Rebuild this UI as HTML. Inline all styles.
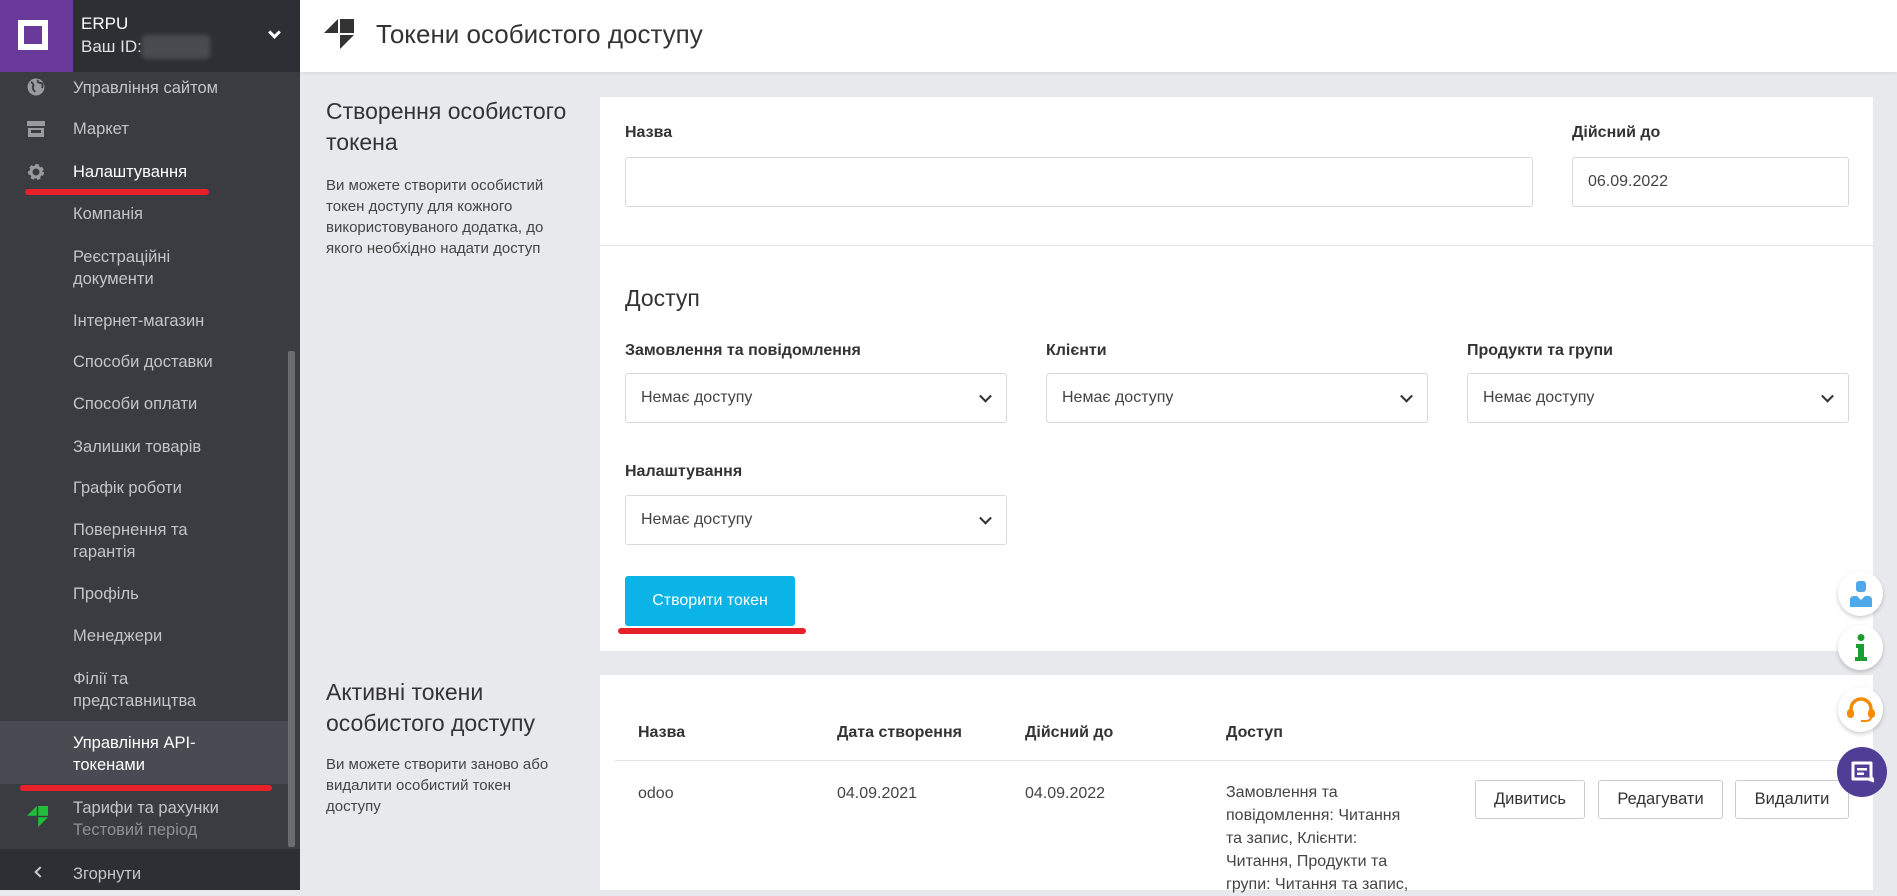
<!DOCTYPE html>
<html><head><meta charset="utf-8"><style>
*{box-sizing:border-box;margin:0;padding:0}
body{width:1897px;height:890px;overflow:hidden;background:#e8e9ed;font-family:"Liberation Sans",Arial,sans-serif;position:relative;color:#333}
.abs{position:absolute}
#sb{left:0;top:0;width:300px;height:890px;background:#3b3c41}
#sbh{left:0;top:0;width:300px;height:72px;background:#2e2f34}
#logo{left:0;top:0;width:73px;height:72px;background:#6a3a9a}
.si{position:absolute;left:73px;color:#c4c5c8;font-size:16.5px;line-height:22px}
.ic{position:absolute;left:27px}
#hdr{left:300px;top:0;width:1597px;height:72px;background:#fff;box-shadow:0 1px 3px rgba(0,0,0,.08)}
.card{position:absolute;background:#fff}
.lbl{position:absolute;font-weight:bold;font-size:16px;color:#333}
.inp{position:absolute;border:1px solid #d8d8d8;border-radius:3px;background:#fff;font-size:16px;color:#444;padding-left:15px;display:flex;align-items:center}
.sel::after{content:"";position:absolute;right:16px;top:50%;width:7px;height:7px;border-right:2.5px solid #333;border-bottom:2.5px solid #333;transform:translateY(-70%) rotate(45deg)}
.h2{position:absolute;font-size:23px;color:#333;line-height:31px}
.p{position:absolute;font-size:15px;color:#444;line-height:21px}
.th{position:absolute;top:724px;font-weight:bold;font-size:16px}
.td{position:absolute;top:785px;font-size:16px;color:#444}
.btn{position:absolute;top:780px;height:39px;border:1px solid #ccc;border-radius:3px;background:#fff;font-size:16.5px;color:#333;display:flex;align-items:center;justify-content:center}
.fb{position:absolute;left:1838px;width:45px;height:45px;border-radius:50%;background:#fff;box-shadow:0 2px 4px rgba(0,0,0,.2);display:flex;align-items:center;justify-content:center}
.red{position:absolute;height:6px;background:#e8202a;border-radius:3px}
</style></head><body>
<div id="sb" class="abs"></div>
<div id="sbh" class="abs"></div>
<div id="logo" class="abs"><div class="abs" style="left:18px;top:20px;width:30px;height:30px;border:6px solid #fff;background:#6a3a9a"></div></div>
<div class="abs" style="left:81px;top:14px;color:#fff;font-size:17px">ERPU</div>
<div class="abs" style="left:81px;top:37px;color:#e0e0e0;font-size:17px">Ваш ID:</div>
<div class="abs" style="left:142px;top:35px;width:68px;height:24px;background:#4a4b50;border-radius:4px;filter:blur(2px)"></div>
<div class="abs" style="left:270px;top:28px;width:9px;height:9px;border-right:3px solid #fff;border-bottom:3px solid #fff;transform:rotate(45deg)"></div>

<svg class="ic" style="top:78px" width="18" height="18" viewBox="0 0 18 18"><circle cx="9" cy="9" r="8.5" fill="#9a9b9f"/><path d="M4 4c2 1 3 3 2 5s1 3 2 5M11 2c-1 2 1 3 3 3s2 3 1 5" stroke="#3b3c41" stroke-width="2" fill="none"/></svg>
<div class="si" style="top:77px">Управління сайтом</div>
<svg class="ic" style="top:121px" width="18" height="16" viewBox="0 0 18 16"><rect x="0" y="0" width="18" height="5" fill="#9a9b9f"/><rect x="1" y="7" width="16" height="9" fill="#9a9b9f"/><rect x="4" y="9" width="10" height="3" fill="#3b3c41"/></svg>
<div class="si" style="top:118px">Маркет</div>
<svg class="ic" style="top:163px" width="18" height="18" viewBox="0 0 18 18"><circle cx="9" cy="9" r="6" fill="none" stroke="#9a9b9f" stroke-width="4" stroke-dasharray="3 2.5"/><circle cx="9" cy="9" r="5" fill="none" stroke="#9a9b9f" stroke-width="3"/><circle cx="9" cy="9" r="2" fill="#3b3c41"/></svg>
<div class="si" style="top:161px;color:#fff">Налаштування</div>
<div class="red" style="left:25px;top:189px;width:184px"></div>
<div class="si" style="top:203px">Компанія</div>
<div class="si" style="top:246px">Реєстраційні<br>документи</div>
<div class="si" style="top:310px">Інтернет-магазин</div>
<div class="si" style="top:351px">Способи доставки</div>
<div class="si" style="top:393px">Способи оплати</div>
<div class="si" style="top:436px">Залишки товарів</div>
<div class="si" style="top:477px">Графік роботи</div>
<div class="si" style="top:519px">Повернення та<br>гарантія</div>
<div class="si" style="top:583px">Профіль</div>
<div class="si" style="top:625px">Менеджери</div>
<div class="si" style="top:668px">Філії та<br>представництва</div>
<div class="abs" style="left:0;top:721px;width:288px;height:63px;background:#4a4b52"></div>
<div class="si" style="top:732px;color:#fff">Управління API-<br>токенами</div>
<div class="red" style="left:20px;top:785px;width:252px"></div>
<svg class="ic" style="top:806px" width="21" height="21" viewBox="0 0 30 30"><polygon points="0,14 14,0 14,14" fill="#1fbf3a"/><rect x="16" y="0" width="14" height="14" fill="#1fbf3a"/><polygon points="16,16 30,16 16,30" fill="#1fbf3a"/></svg>
<div class="si" style="top:797px">Тарифи та рахунки</div>
<div class="si" style="top:819px;color:#8e8f93">Тестовий період</div>
<div class="abs" style="left:288px;top:351px;width:7px;height:496px;background:#6b6c70;border-radius:2px"></div>
<div class="abs" style="left:0;top:849px;width:300px;height:41px;background:#2e2f34"></div>
<div class="abs" style="left:36px;top:868px;width:8px;height:8px;border-left:2.5px solid #ccc;border-bottom:2.5px solid #ccc;transform:rotate(45deg)"></div>
<div class="si" style="top:863px">Згорнути</div>

<div id="hdr" class="abs"></div>
<svg class="abs" style="left:324px;top:19px" width="30" height="30" viewBox="0 0 30 30"><polygon points="0,14 14,0 14,14" fill="#333"/><rect x="16" y="0" width="14" height="14" fill="#333"/><polygon points="16,16 30,16 16,30" fill="#333"/></svg>
<div class="abs" style="left:376px;top:19px;font-size:26px;color:#333">Токени особистого доступу</div>

<div class="h2" style="left:326px;top:96px">Створення особистого<br>токена</div>
<div class="p" style="left:326px;top:175px">Ви можете створити особистий<br>токен доступу для кожного<br>використовуваного додатка, до<br>якого необхідно надати доступ</div>

<div class="card" style="left:600px;top:97px;width:1273px;height:554px"></div>
<div class="lbl" style="left:625px;top:124px">Назва</div>
<div class="inp" style="left:625px;top:157px;width:908px;height:50px"></div>
<div class="lbl" style="left:1572px;top:124px">Дійсний до</div>
<div class="inp" style="left:1572px;top:157px;width:277px;height:50px">06.09.2022</div>
<div class="abs" style="left:600px;top:245px;width:1273px;height:1px;background:#e2e2e2"></div>
<div class="abs" style="left:625px;top:285px;font-size:23px">Доступ</div>
<div class="lbl" style="left:625px;top:342px">Замовлення та повідомлення</div>
<div class="lbl" style="left:1046px;top:342px">Клієнти</div>
<div class="lbl" style="left:1467px;top:342px">Продукти та групи</div>
<div class="inp sel" style="left:625px;top:373px;width:382px;height:50px">Немає доступу</div>
<div class="inp sel" style="left:1046px;top:373px;width:382px;height:50px">Немає доступу</div>
<div class="inp sel" style="left:1467px;top:373px;width:382px;height:50px">Немає доступу</div>
<div class="lbl" style="left:625px;top:463px">Налаштування</div>
<div class="inp sel" style="left:625px;top:495px;width:382px;height:50px">Немає доступу</div>
<div class="abs" style="left:625px;top:576px;width:170px;height:50px;background:#0ab4e6;border-radius:3px;color:#fff;font-size:16px;display:flex;align-items:center;justify-content:center">Створити токен</div>
<div class="red" style="left:618px;top:628px;width:188px"></div>

<div class="h2" style="left:326px;top:677px">Активні токени<br>особистого доступу</div>
<div class="p" style="left:326px;top:754px">Ви можете створити заново або<br>видалити особистий токен<br>доступу</div>
<div class="card" style="left:600px;top:675px;width:1273px;height:215px"></div>
<div class="th" style="left:638px">Назва</div>
<div class="th" style="left:837px">Дата створення</div>
<div class="th" style="left:1025px">Дійсний до</div>
<div class="th" style="left:1226px">Доступ</div>
<div class="abs" style="left:615px;top:760px;width:1240px;height:1px;background:#e2e2e2"></div>
<div class="td" style="left:638px">odoo</div>
<div class="td" style="left:837px">04.09.2021</div>
<div class="td" style="left:1025px">04.09.2022</div>
<div class="td" style="left:1226px;line-height:23px;top:781px">Замовлення та<br>повідомлення: Читання<br>та запис, Клієнти:<br>Читання, Продукти та<br>групи: Читання та запис,</div>
<div class="btn" style="left:1475px;width:110px">Дивитись</div>
<div class="btn" style="left:1598px;width:125px">Редагувати</div>
<div class="btn" style="left:1735px;width:114px">Видалити</div>

<div class="fb" style="top:571px"><svg width="22" height="26" viewBox="0 0 22 26"><rect x="6" y="0" width="10" height="11" rx="3" fill="#4fa8e8"/><path d="M0 26V19q0-4 4-4h3l4 4 4-4h3q4 0 4 4v7z" fill="#4fa8e8"/></svg></div>
<div class="fb" style="top:625px"><svg width="14" height="28" viewBox="0 0 14 28"><circle cx="7" cy="3.5" r="3.5" fill="#1a9e2e"/><path d="M2 10h8v13h3v4H1v-4h3v-9H2z" fill="#1a9e2e"/></svg></div>
<div class="fb" style="top:687px"><svg width="28" height="26" viewBox="0 0 28 26"><path d="M4 14V12a10 10 0 0 1 20 0v2" stroke="#f58a07" stroke-width="3.5" fill="none"/><rect x="0" y="12" width="7" height="9" rx="3.5" fill="#f58a07"/><rect x="21" y="12" width="7" height="9" rx="3.5" fill="#f58a07"/><path d="M24 20q0 4-6 4h-4" stroke="#f58a07" stroke-width="2" fill="none"/></svg></div>
<div class="abs" style="left:1837px;top:747px;width:50px;height:50px;border-radius:50%;background:#4f3e96;display:flex;align-items:center;justify-content:center"><svg width="24" height="24" viewBox="0 0 24 24"><path d="M3 3h18v14l3 4-6-2H3z" stroke="#fff" stroke-width="3" fill="none" stroke-linejoin="round"/><rect x="7" y="8" width="10" height="2.5" fill="#fff"/><rect x="7" y="12.5" width="7" height="2.5" fill="#fff"/></svg></div>
</body></html>
